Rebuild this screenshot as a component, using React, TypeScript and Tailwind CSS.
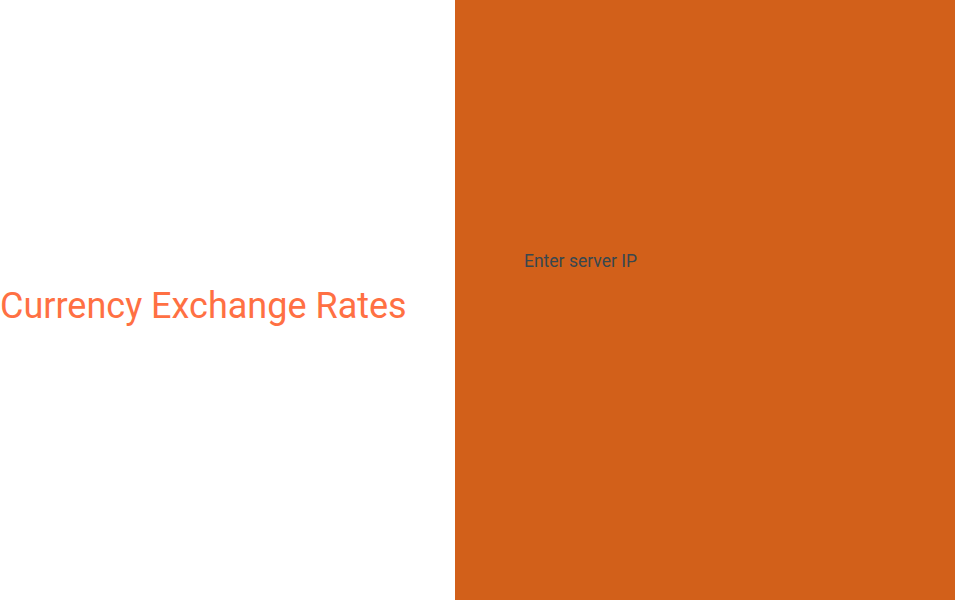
export default function App() {
  return (
    <div className="flex h-[600px] w-[955px] overflow-hidden bg-white" style={{ fontFamily: 'Roboto, sans-serif' }}>
      <div className="flex w-[455px] shrink-0 items-center">
        <h1 className="mt-[12px] whitespace-nowrap text-[36px] font-normal leading-none text-[#ff7043]">Currency Exchange Rates</h1>
      </div>
      <div className="flex flex-1 flex-col bg-[#d2601a] pl-[69px] pt-[250px]">
        <input
          className="w-[300px] bg-transparent text-[17.5px] leading-[22px] text-[#37474f] outline-none placeholder:text-[#37474f]"
          placeholder="Enter server IP"
        />
      </div>
    </div>
  );
}
